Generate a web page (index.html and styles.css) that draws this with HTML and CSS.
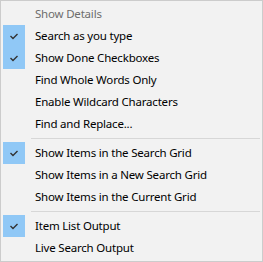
FILE: index.html
```html
<!DOCTYPE html>
<html lang="en">
  <head>
    <meta charset="UTF-8" />
    <title>Search Options Menu</title>
    <link rel="stylesheet" href="styles.css">
  </head>
  <body>
    <!-- Context menu -->
    <ul class="menu">
      <li class="menu-item disabled"><span class="check"></span><span class="label">Show Details</span></li>
      <li class="menu-item checked">
        <span class="check"><svg viewBox="0 0 22 22"><polyline points="7.5,11 10,13.5 14.5,9" /></svg></span>
        <span class="label">Search as you type</span>
      </li>
      <li class="menu-item checked">
        <span class="check"><svg viewBox="0 0 22 22"><polyline points="7.5,11 10,13.5 14.5,9" /></svg></span>
        <span class="label">Show Done Checkboxes</span>
      </li>
      <li class="menu-item"><span class="check"></span><span class="label">Find Whole Words Only</span></li>
      <li class="menu-item"><span class="check"></span><span class="label">Enable Wildcard Characters</span></li>
      <li class="menu-item"><span class="check"></span><span class="label">Find and Replace...</span></li>
      <li class="separator"></li>
      <li class="menu-item checked">
        <span class="check"><svg viewBox="0 0 22 22"><polyline points="7.5,11 10,13.5 14.5,9" /></svg></span>
        <span class="label">Show Items in the Search Grid</span>
      </li>
      <li class="menu-item"><span class="check"></span><span class="label">Show Items in a New Search Grid</span></li>
      <li class="menu-item"><span class="check"></span><span class="label">Show Items in the Current Grid</span></li>
      <li class="separator"></li>
      <li class="menu-item checked">
        <span class="check"><svg viewBox="0 0 22 22"><polyline points="7.5,11 10,13.5 14.5,9" /></svg></span>
        <span class="label">Item List Output</span>
      </li>
      <li class="menu-item"><span class="check"></span><span class="label">Live Search Output</span></li>
    </ul>
  </body>
</html>
```

FILE: styles.css
```css
* {
  margin: 0;
  padding: 0;
  box-sizing: border-box;
}

body {
  font-family: "Noto Sans", "Open Sans", Arial, sans-serif;
  font-size: 11.5px;
  letter-spacing: -0.2px;
  background-color: #f2f2f2;
}

.menu {
  list-style: none;
  width: 263px;
  height: 262px;
  padding: 2px;
  border: 1px solid #cccccc;
  background-color: #f2f2f2;
}

.menu-item {
  display: flex;
  align-items: center;
  height: 22px;
  color: #000;
}

.menu-item.disabled {
  color: #6d6d6d;
}

.check {
  display: flex;
  align-items: center;
  justify-content: center;
  width: 22px;
  height: 22px;
  flex-shrink: 0;
}

.menu-item.checked .check {
  background-color: #90c8f6;
}

.check svg {
  width: 22px;
  height: 22px;
}

.check polyline {
  fill: none;
  stroke: #333;
  stroke-width: 1.4;
}

.label {
  padding: 0 0 2px 10px;
  white-space: nowrap;
}

.separator {
  height: 7px;
  padding: 3px 0 0 28px;
}

.separator::after {
  content: "";
  display: block;
  height: 1px;
  background-color: #d7d7d7;
}
```
